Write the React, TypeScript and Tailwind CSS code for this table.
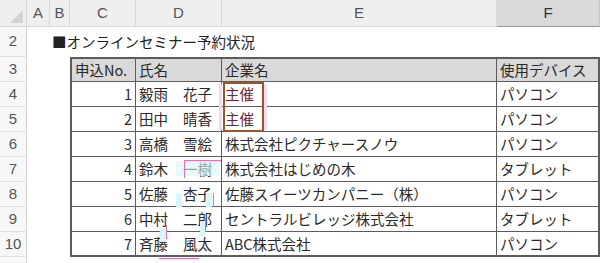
import React from "react";

const jp = { fontFamily: '"Noto Sans CJK JP", "Noto Sans", sans-serif' };

type Row = { no: number; name: [string, string]; company: string; device: string; host?: boolean };

const rows: Row[] = [
  { no: 1, name: ["毅雨", "花子"], company: "主催", device: "パソコン", host: true },
  { no: 2, name: ["田中", "晴香"], company: "主催", device: "パソコン", host: true },
  { no: 3, name: ["高橋", "雪絵"], company: "株式会社ピクチャースノウ", device: "パソコン" },
  { no: 4, name: ["鈴木", "一樹"], company: "株式会社はじめの木", device: "タブレット" },
  { no: 5, name: ["佐藤", "杏子"], company: "佐藤スイーツカンパニー（株）", device: "パソコン" },
  { no: 6, name: ["中村", "二郎"], company: "セントラルビレッジ株式会社", device: "タブレット" },
  { no: 7, name: ["斉藤", "風太"], company: "ABC株式会社", device: "パソコン" },
];

function ColHead({ label, selected }: { label: string; selected?: boolean }) {
  return (
    <div
      className={`flex items-center justify-center border-r border-b text-[15px] ${
        selected ? "bg-[#d9d9d9] border-b-[#9a9a9a] border-r-[#c4c4c4] text-[#333]" : "bg-[#efefef] border-[#d8d8d8] text-[#555]"
      }`}
      style={{ fontFamily: '"Liberation Sans", Arial, sans-serif' }}
    >
      {label}
    </div>
  );
}

function RowHead({ n }: { n?: number }) {
  return (
    <div
      className="flex items-center justify-center bg-[#f7f7f7] border-r border-r-[#d4d4d4] border-b border-b-[#e2e2e2] text-[15px] text-[#555]"
      style={{ fontFamily: '"Liberation Sans", Arial, sans-serif' }}
    >
      {n}
    </div>
  );
}

export default function App() {
  const cell = "flex items-center border-r border-b border-[#5c5c5c] text-[14.5px] text-[#2a2a2a] whitespace-nowrap overflow-hidden";
  return (
    <div className="w-[600px] h-[263px] overflow-hidden bg-white relative" style={jp}>
      <div className="grid grid-cols-[27px_23px_20px_66px_86px_275px_103px] grid-rows-[27px_30px_repeat(9,25px)]">
        {/* column headers */}
        <div className="relative bg-[#efefef] border-r border-b border-[#d8d8d8]">
          <svg className="absolute right-[3px] bottom-[3px]" width="13" height="13" viewBox="0 0 13 13">
            <polygon points="13,0 13,13 0,13" fill="#d2d2d2" />
          </svg>
        </div>
        <ColHead label="A" />
        <ColHead label="B" />
        <ColHead label="C" />
        <ColHead label="D" />
        <ColHead label="E" />
        <ColHead label="F" selected />

        {/* row 2 */}
        <RowHead n={2} />
        <div />
        <div className="col-span-5 flex items-center pl-[2px] text-[14.5px] text-[#222] whitespace-nowrap">
          ■オンラインセミナー予約状況
        </div>

        {/* row 3 header */}
        <RowHead n={3} />
        <div />
        <div />
        <div className={`${cell} bg-[#d9d9d9] border-l-2 border-t-2 pl-[3px]`}>申込No.</div>
        <div className={`${cell} bg-[#d9d9d9] border-t-2 pl-[3px]`}>氏名</div>
        <div className={`${cell} bg-[#d9d9d9] border-t-2 pl-[3px]`}>企業名</div>
        <div className={`${cell} bg-[#d9d9d9] border-t-2 border-r-2 pl-[3px]`}>使用デバイス</div>

        {rows.map((r, i) => {
          const last = i === rows.length - 1;
          const b = last ? "border-b-2" : "";
          return (
            <React.Fragment key={r.no}>
              <RowHead n={i + 4} />
              <div />
              <div />
              <div className={`${cell} ${b} border-l-2 justify-end pr-[3px]`}>{r.no}</div>
              <div className={`${cell} ${b} pl-[3px] gap-[15px]`}>
                <span>{r.name[0]}</span>
                <span>{r.name[1]}</span>
              </div>
              <div className={`${cell} ${b} pl-[3px] ${r.host ? "text-[#6a2436]" : ""}`}>{r.company}</div>
              <div className={`${cell} ${b} border-r-2 pl-[3px]`}>{r.device}</div>
            </React.Fragment>
          );
        })}

        <RowHead />
      </div>

      {/* host marker box */}
      <div className="absolute left-[223px] top-[82px] w-[41px] h-[50px] border-2 border-[#9c5428] pointer-events-none" />
      <div className="absolute left-[219px] top-[84px] w-[3px] h-[46px] bg-[#f8d8ea] pointer-events-none" />
      <div className="absolute left-[264px] top-[84px] w-[3px] h-[46px] bg-[#f8d8ea] pointer-events-none" />

      {/* faint selection traces */}
      <div className="absolute left-[176px] top-[161px] w-[44px] h-[15px] bg-[#d6f7f7] opacity-60 pointer-events-none" />
      <div className="absolute left-[184px] top-[160px] w-[37px] h-[1px] bg-[#f06ab0] pointer-events-none" />
      <div className="absolute left-[184px] top-[160px] w-[1px] h-[18px] bg-[#f06ab0] pointer-events-none" />
      <div className="absolute left-[213px] top-[193px] w-[1px] h-[14px] bg-[#f06ab0] pointer-events-none" />
      <div className="absolute left-[176px] top-[193px] w-[6px] h-[14px] bg-[#d6f7f7] pointer-events-none" />
      <div className="absolute left-[206px] top-[193px] w-[6px] h-[14px] bg-[#d6f7f7] pointer-events-none" />
      <div className="absolute left-[166px] top-[225px] w-[1px] h-[14px] bg-[#f06ab0] pointer-events-none" />
      <div className="absolute left-[205px] top-[218px] w-[1px] h-[14px] bg-[#f06ab0] pointer-events-none" />
      <div className="absolute left-[160px] top-[228px] w-[6px] h-[14px] bg-[#d6f7f7] pointer-events-none" />
      <div className="absolute left-[200px] top-[222px] w-[5px] h-[14px] bg-[#d6f7f7] pointer-events-none" />
      <div className="absolute left-[159px] top-[258px] w-[40px] h-[1px] bg-[#f06ab0] pointer-events-none" />
    </div>
  );
}
